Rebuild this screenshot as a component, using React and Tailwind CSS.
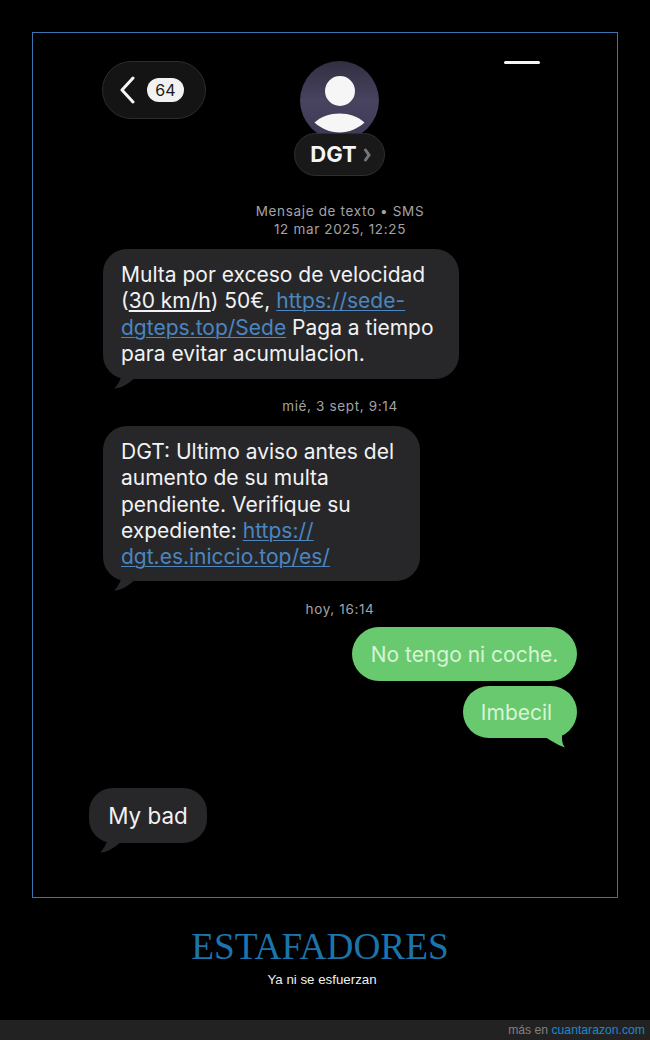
import React from 'react'

const sfStack = 'font-["Inter","Liberation_Sans",sans-serif]'

function Stamp({ children, className = '' }) {
    return (
        <div className={`text-center text-[13.5px] leading-[18px] tracking-[0.65px] text-[#a3a3a6] ${className}`}>
            {children}
        </div>
    )
}

function Link({ children }) {
    return <span className="text-[#4a86c0] underline decoration-1 underline-offset-2">{children}</span>
}

function TailLeft({ className, fill = '#27272a' }) {
    return (
        <svg className={`absolute ${className}`} width="22" height="18" viewBox="0 0 22 18">
            <path d="M8 0 C8 6 5 13 0 17.5 C7 17.5 14 13 22 6 L22 0 Z" fill={fill} />
        </svg>
    )
}

function Incoming({ className = '', children }) {
    return (
        <div className={`relative rounded-[24px] bg-[#27272a] text-[21px] leading-[26.3px] text-[#f2f2f4] ${className}`}>
            {children}
        </div>
    )
}

export default function App() {
    return (
        <div className={`flex h-[1040px] w-[650px] flex-col bg-black ${sfStack}`}>
            <div className="mx-8 mt-8 h-[866px] w-[586px] border border-[#3c74ad] pl-[70px] pr-[40px] pt-[28px]">
                {/* header */}
                <div className="flex items-start">
                    <div className="-ml-px flex h-[58px] w-[104px] items-center gap-[12px] rounded-full border border-[#2c2c2e] bg-[#141415] pl-[16px]">
                        <svg width="16" height="28" viewBox="0 0 16 28" fill="none" stroke="#f5f5f5" strokeWidth="3" strokeLinecap="round" strokeLinejoin="round">
                            <path d="M14 2 L3 14 L14 26" />
                        </svg>
                        <div className="flex h-[24px] w-[37px] items-center justify-center rounded-full bg-[#f2f2f2] text-[16px] text-[#1a1a1a]">64</div>
                    </div>
                    <div className="ml-[88px] flex w-[91px] flex-col items-center">
                        <div className="relative h-[79px] w-[79px] rounded-full bg-gradient-to-b from-[#322f42] via-[#48435f] to-[#3d3953]">
                            <div className="mx-auto mt-[15px] h-[30px] w-[30px] rounded-full bg-[#f6f6f6]" />
                            <svg className="absolute left-[14px] top-[52px] z-10" width="51" height="20" viewBox="0 0 51 20">
                                <path d="M0.5 9.5 C7 3.5 16 0.5 25.5 0.5 C35 0.5 44 3.5 50.5 9.5 C44 15.5 35 19.5 25.5 19.5 C16 19.5 7 15.5 0.5 9.5 Z" fill="#f6f6f6" />
                            </svg>
                        </div>
                        <div className="relative -mt-[7px] flex h-[43px] w-[91px] items-center justify-center gap-[7px] rounded-full border border-[#2f2f31] bg-[#19191a] pl-[2px] text-[22px] font-bold text-[#f5f5f5]">
                            DGT
                            <svg width="7" height="16" viewBox="0 0 7 16" fill="none" stroke="#77777a" strokeWidth="3" strokeLinecap="round">
                                <path d="M1.5 3 L5 8 L1.5 13" />
                            </svg>
                        </div>
                    </div>
                    <div className="ml-[119px] h-[3px] w-[36px] rounded-full bg-[#f5f5f5]" />
                </div>

                {/* messages */}
                <Stamp className="mt-[26px]">
                    <div>Mensaje de texto • SMS</div>
                    <div>12 mar 2025, 12:25</div>
                </Stamp>

                <Incoming className="mt-[11px] h-[130px] w-[356px] pl-[18px] pt-[13px]">
                    <div>Multa por exceso de velocidad</div>
                    <div>(<span className="underline underline-offset-2">30 km/h</span>) 50€, <Link>https://sede-</Link></div>
                    <div><Link>dgteps.top/Sede</Link> Paga a tiempo</div>
                    <div>para evitar acumulacion.</div>
                    <TailLeft className="bottom-[-10px] left-[11px]" />
                </Incoming>

                <Stamp className="mt-[18px]">mié, 3 sept, 9:14</Stamp>

                <Incoming className="mt-[11px] h-[155px] w-[317px] pl-[18px] pt-[13px]">
                    <div>DGT: Ultimo aviso antes del</div>
                    <div>aumento de su multa</div>
                    <div>pendiente. Verifique su</div>
                    <div>expediente: <Link>https://</Link></div>
                    <div><Link>dgt.es.iniccio.top/es/</Link></div>
                    <TailLeft className="bottom-[-10px] left-[11px]" />
                </Incoming>

                <Stamp className="mt-[19px]">hoy, 16:14</Stamp>

                <div className="mt-[9px] flex flex-col items-end gap-[5px]">
                    <div className="flex h-[54px] w-[225px] items-center justify-center rounded-full bg-[#69c96e] pt-[2px] text-[21px] text-[#d6f5d6]">No tengo ni coche.</div>
                    <div className="relative flex h-[52px] w-[114px] items-center justify-center rounded-[26px] bg-[#69c96e] pr-[7px] pt-[2px] text-[21px] text-[#d6f5d6]">
                        Imbecil
                        <svg className="absolute bottom-[-10px] right-[11px]" width="22" height="18" viewBox="0 0 22 18">
                            <path d="M0 6 C6 10 13 15 21 17.5 C18 14 17 8 19 0 L0 0 Z" fill="#69c96e" />
                        </svg>
                    </div>
                </div>

                <Incoming className="-ml-[14px] mt-[50px] flex h-[55px] w-[118px] items-center justify-center pt-[2px] text-[22.4px]">
                    My bad
                    <TailLeft className="bottom-[-10px] left-[11px]" />
                </Incoming>
            </div>

            {/* caption */}
            <div className='mt-[29px] pr-[10px] text-center font-["Liberation_Serif",serif] text-[37.3px] leading-[40px] text-[#1a75ad]'>ESTAFADORES</div>
            <div className='mt-[5px] pr-[6px] text-center font-["Liberation_Sans",sans-serif] text-[13.3px] leading-[16px] text-[#f0f0f0]'>Ya ni se esfuerzan</div>

            {/* footer */}
            <div className='mt-auto flex h-[20px] items-center justify-end bg-[#222222] pr-[5px] font-["Liberation_Sans",sans-serif] text-[12.2px] text-[#808080]'>
                <span>más en&nbsp;</span>
                <span className="text-[#1e88c7]">cuantarazon.com</span>
            </div>
        </div>
    )
}
